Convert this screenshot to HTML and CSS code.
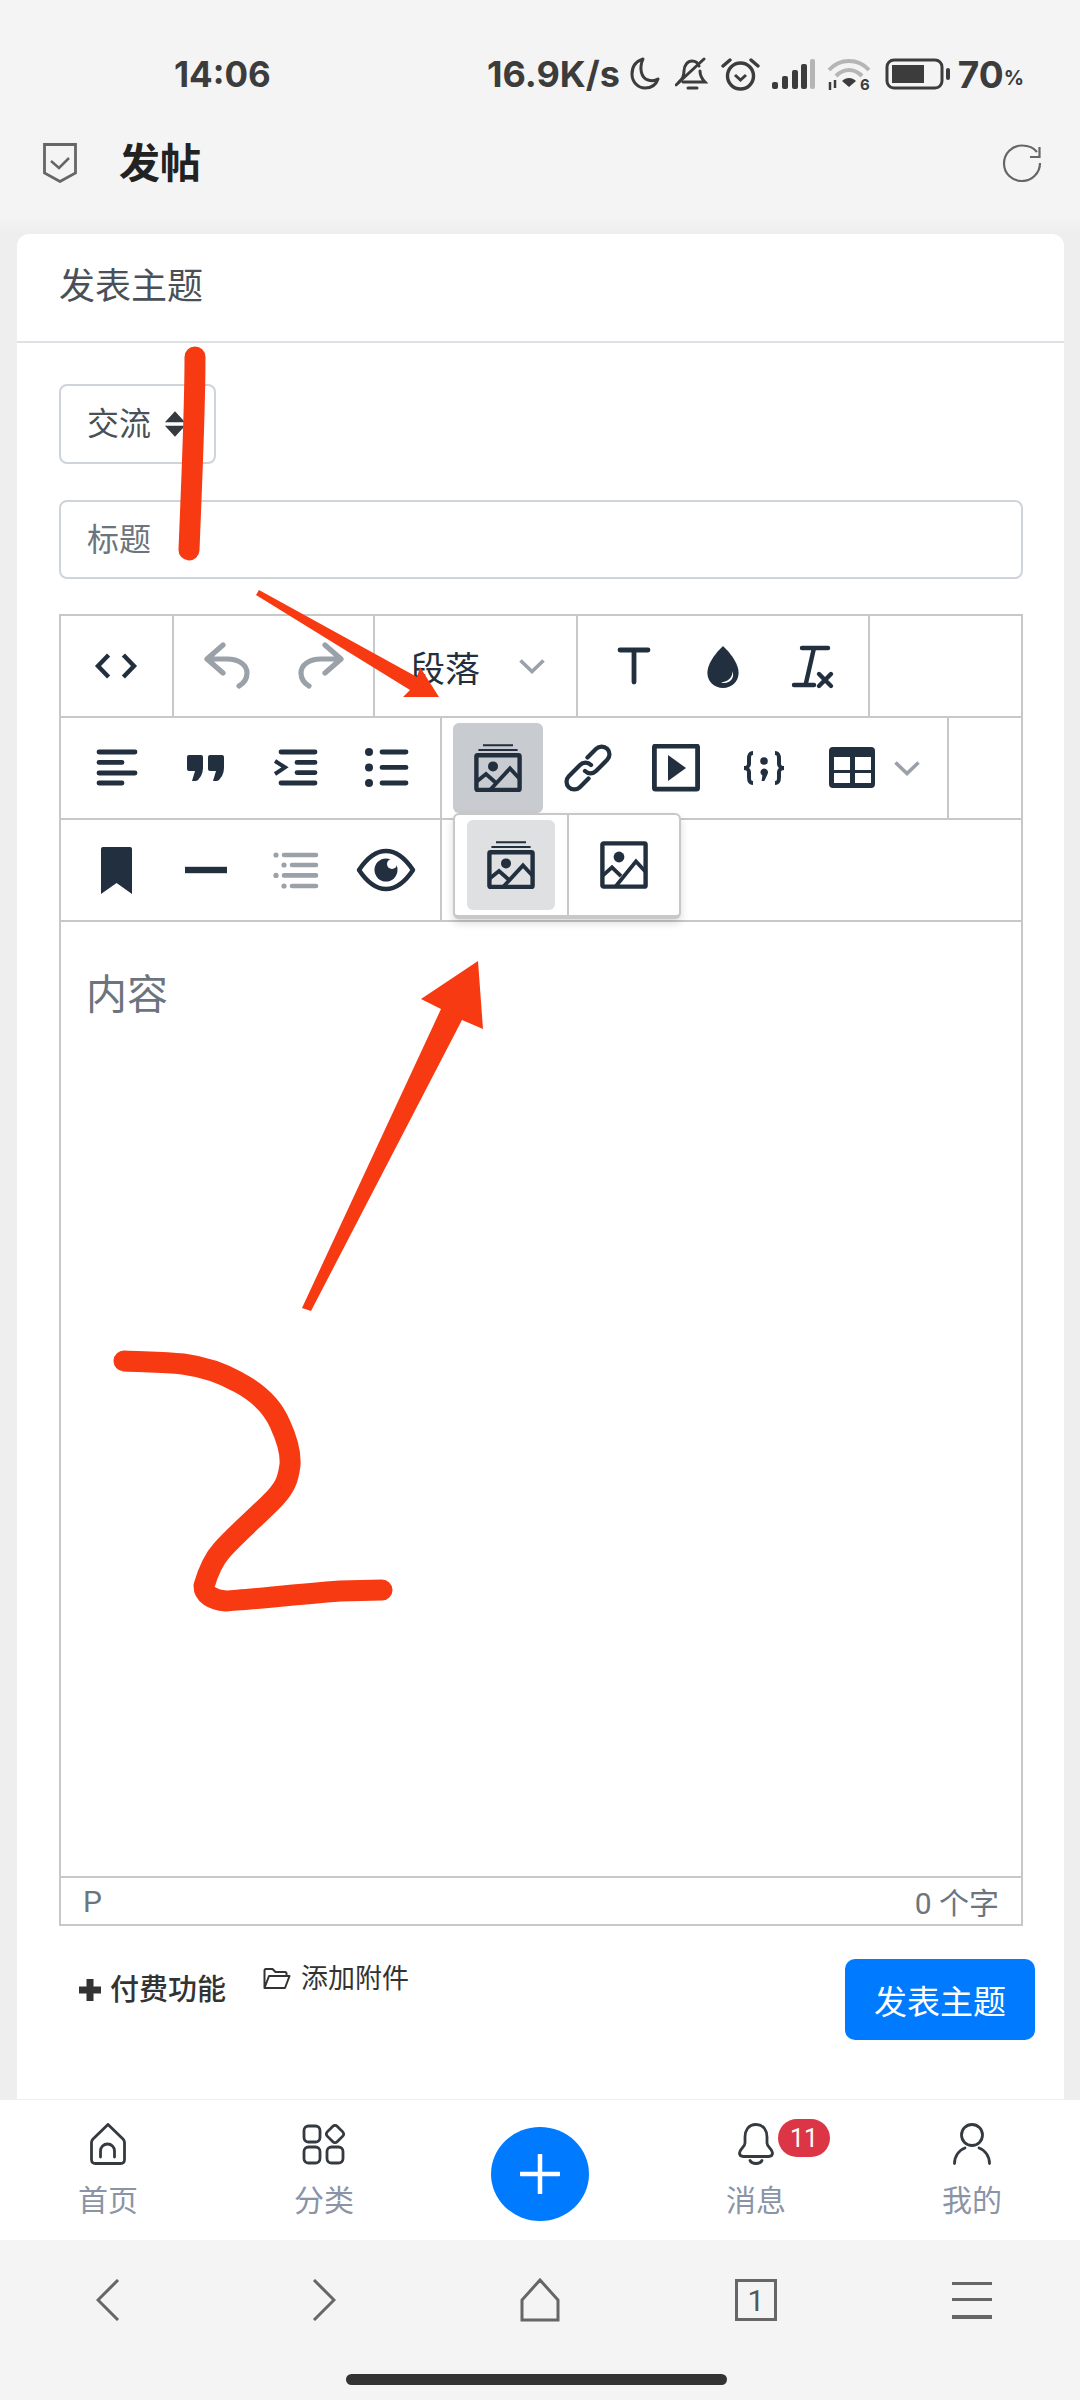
FILE: index.html
```html
<!DOCTYPE html>
<html lang="zh">
<head>
  <meta charset="UTF-8" />
  <meta name="viewport" content="width=device-width, initial-scale=1.0"/>
  <title>发帖</title>
  <link rel="stylesheet" href="styles.css">
</head>
<body>

<svg class="defs" width="0" height="0">
  <symbol id="i-images" viewBox="0 0 24 24">
    <path d="M4.500 .6H19.500M2.200 3H21.800" fill="none" stroke="currentColor" stroke-width="1"/>
    <rect x="1.200" y="5.600" width="21.600" height="17.400" rx=".6" fill="none" stroke="currentColor" stroke-width="2.200"/>
    <circle cx="9.500" cy="11.200" r="2.500" fill="currentColor"/>
    <path d="M1.500 18.600 6 15l4.500 4M8 23 18 12.200l5 5.400" fill="none" stroke="currentColor" stroke-width="1.900"/>
  </symbol>
  <symbol id="i-image" viewBox="0 0 24 24">
    <rect x="1.200" y="1.200" width="21.600" height="21.600" rx=".6" fill="none" stroke="currentColor" stroke-width="2.200"/>
    <circle cx="9.500" cy="8" r="2.700" fill="currentColor"/>
    <path d="M1.500 17.200 6 13.200l4.500 4.400M7.600 23 18 10.200l5 5.400" fill="none" stroke="currentColor" stroke-width="1.900"/>
  </symbol>
  <symbol id="i-chevron" viewBox="0 0 28 16">
    <path d="M2.500 2.500 14 13.500 25.500 2.500" fill="none" stroke="currentColor" stroke-width="3.600"/>
  </symbol>
</svg>

<div class="phone">
  <div class="status">
    <span class="time">14:06</span>
    <div class="status-right">
      <span class="speed">16.9K/s</span>
      <svg class="st-moon" viewBox="0 0 32 34"><path d="M14 2C8 4 3 9 3 17c0 8 6 14 13 14 6 0 11-3 13-9-3 2-7 2-10 1-7-2-9-12-5-21Z" fill="none" stroke="#3c3c3c" stroke-width="3" stroke-linejoin="round"/></svg>
      <svg class="st-bell" viewBox="0 0 33 34"><path d="M4 25c3-3 5-5 5-11 0-6 4-10 8-10 3 0 6 2 7 5M25 14c0 5 2 8 5 11H8M13 31h9" fill="none" stroke="#3c3c3c" stroke-width="3" stroke-linecap="round"/><path d="M1 28 29 2" stroke="#3c3c3c" stroke-width="3" stroke-linecap="round"/></svg>
      <svg class="st-alarm" viewBox="0 0 39 34"><circle cx="19.500" cy="19" r="13" fill="none" stroke="#3c3c3c" stroke-width="3.400"/><path d="M14 18l5.500 5 5.500-5" fill="none" stroke="#3c3c3c" stroke-width="3"/><path d="M2 9 9 3M37 9 30 3" stroke="#3c3c3c" stroke-width="3.400" stroke-linecap="round"/></svg>
      <svg class="st-signal" viewBox="0 0 43 30"><g fill="#3c3c3c"><rect x="0" y="23" width="6" height="7" rx="2"/><rect x="10" y="17" width="6" height="13" rx="2"/><rect x="20" y="11" width="6" height="19" rx="2"/><rect x="29" y="5" width="6" height="25" rx="2"/></g><rect x="38" y="0" width="5" height="30" rx="2" fill="#b5b5b5"/></svg>
      <svg class="st-wifi" viewBox="0 0 44 34"><path d="M2 13C13 1 31 1 42 13M9 19c8-8 18-8 26 0" fill="none" stroke="#b5b5b5" stroke-width="4"/><path d="M15 24c4-4 10-4 14 0l-7 6Z" fill="#3c3c3c"/><path d="M3 25v8M8 23v8" stroke="#3c3c3c" stroke-width="2.500"/><text x="33" y="33" class="st-six">6</text></svg>
      <svg class="st-batt" viewBox="0 0 65 32"><rect x="2" y="2" width="55" height="28" rx="7" fill="none" stroke="#3c3c3c" stroke-width="3"/><rect x="7" y="7" width="32" height="18" fill="#3c3c3c"/><rect x="61" y="10" width="4" height="12" rx="2" fill="#3c3c3c"/></svg>
      <span class="batt-num">70</span><span class="batt-pct">%</span>
    </div>
  </div>

  <div class="appbar">
    <svg class="shield" viewBox="0 0 34 40"><path d="M1.500 1.500H32.500V30L17 38.500 1.500 30Z" fill="none" stroke="#666" stroke-width="2.800"/><path d="M8 18l8 7 10-10" fill="none" stroke="#666" stroke-width="2.500"/></svg>
    <span class="appbar-title">发帖</span>
    <svg class="refresh" viewBox="0 0 40 38"><path d="M35 8C32 4 26 1.500 20 1.500 10 1.500 2 9.500 2 19.500S10 37 20 37 38 29 38 19" fill="none" stroke="#666" stroke-width="2.200"/><path d="M37.500 3V13H28" fill="none" stroke="#666" stroke-width="2.200"/></svg>
  </div>

  <div class="main">
    <div class="card">
      <div class="card-head">发表主题</div>
      <div class="card-body">
        <div class="select"><span>交流</span>
          <svg class="select-arrows" viewBox="0 0 24 28"><path d="M12 0 23 12H1ZM12 28 1 16H23Z" fill="#343a40"/></svg>
        </div>
        <div class="input">标题</div>

        <div class="editor">
          <div class="tb-row">
            <div class="tb-group g-code">
              <span class="tool"><svg class="ic" viewBox="0 0 24 24"><path d="M8.300 6.500 3 12l5.300 5.500M15.700 6.500 21 12l-5.300 5.500" fill="none" stroke="currentColor" stroke-width="2.200"/></svg></span>
            </div>
            <div class="tb-group g-hist">
              <span class="tool muted"><svg class="ic" viewBox="0 0 24 24"><path d="M10 1.500 2 8.500l8 7M2 8.500H12C18 8.500 22 11.500 22 15.500 22 18 20.500 20.500 18 22" fill="none" stroke="currentColor" stroke-width="2.600" stroke-linecap="round" stroke-linejoin="round"/></svg></span>
              <span class="tool muted"><svg class="ic" viewBox="0 0 24 24"><path d="M14 1.500l8 7-8 7M22 8.500H12C6 8.500 2 11.500 2 15.500 2 18 3.500 20.500 6 22" fill="none" stroke="currentColor" stroke-width="2.600" stroke-linecap="round" stroke-linejoin="round"/></svg></span>
            </div>
            <div class="tb-group g-block">
              <span class="block-name">段落</span>
              <svg class="chev" viewBox="0 0 28 16"><use href="#i-chevron"/></svg>
            </div>
            <div class="tb-group">
              <span class="tool"><svg class="ic" viewBox="0 0 24 24"><path d="M5.500 4H19.500M12.500 4V20" fill="none" stroke="currentColor" stroke-width="2.400" stroke-linecap="round"/></svg></span>
              <span class="tool"><svg class="ic" viewBox="0 0 24 24"><path d="M12 2C12 2 4.200 9 4.200 15.500 4.200 19.800 7.700 23 12 23 16.300 23 19.800 19.800 19.800 15.500 19.800 9 12 2 12 2Z" fill="currentColor"/><path d="M16.700 14.500C17 17.500 14.500 20 11 20.200 14.500 21.500 18.300 18.500 16.700 14.500Z" fill="#fff"/></svg></span>
              <span class="tool"><svg class="ic" viewBox="0 0 24 24"><path d="M6.500 3H19.500M12.500 3 8.500 20.500M2.500 21.500H12.500M15 16l6 6M21 16l-6 6" fill="none" stroke="currentColor" stroke-width="2.200" stroke-linecap="round"/></svg></span>
            </div>
          </div>

          <div class="tb-row">
            <div class="tb-group g-wide">
              <span class="tool"><svg class="ic" viewBox="0 0 24 24"><path d="M3.500 4H21.500M3.500 9.200H15M3.500 14.500H21.500M3.500 19.500H15" fill="none" stroke="currentColor" stroke-width="2.400" stroke-linecap="round"/></svg></span>
              <span class="tool"><svg class="ic" viewBox="0 0 24 24"><path d="M3.500 5.500H9.500Q10.500 5.500 10.500 6.500V12Q10.500 14 9.500 16L8 18Q7.500 18.500 6.500 18.500H5L6.500 13.500H3.500Q2.500 13.500 2.500 12.500V6.500Q2.500 5.500 3.500 5.500ZM14 5.500H20Q21 5.500 21 6.500V12Q21 14 20 16L18.500 18Q18 18.500 17 18.500H15.500L17 13.500H14Q13 13.500 13 12.500V6.500Q13 5.500 14 5.500Z" fill="currentColor"/></svg></span>
              <span class="tool"><svg class="ic" viewBox="0 0 24 24"><path d="M4.500 4H21.500M12.500 9.200H21.500M12.500 14.300H21.500M4.500 19.500H21.500" fill="none" stroke="currentColor" stroke-width="2.400" stroke-linecap="round"/><path d="M1.500 8.500 6.500 11.700 1.500 15" fill="none" stroke="currentColor" stroke-width="2"/></svg></span>
              <span class="tool"><svg class="ic" viewBox="0 0 24 24"><circle cx="3.500" cy="4" r="2" fill="currentColor"/><circle cx="3.500" cy="11.700" r="2" fill="currentColor"/><circle cx="3.500" cy="19.500" r="2" fill="currentColor"/><path d="M10 4H22M10 11.700H22M10 19.500H22" fill="none" stroke="currentColor" stroke-width="2.400" stroke-linecap="round"/></svg></span>
            </div>
            <div class="tb-group g-insert">
              <span class="tool active"><svg class="ic"><use href="#i-images"/></svg></span>
              <span class="tool"><svg class="ic" viewBox="0 0 24 24"><g transform="rotate(45 12 12) translate(12 12) scale(1.180) translate(-12 -12)" fill="none" stroke="currentColor" stroke-width="1.800" stroke-linecap="round"><path d="M8.700 9V3.800a3.300 3.300 0 0 1 6.600 0V10.500a3.300 3.300 0 0 1-3.300 3.300"/><path d="M15.300 15V20.200a3.300 3.300 0 0 1-6.600 0V13.500a3.300 3.300 0 0 1 3.300-3.300"/></g></svg></span>
              <span class="tool"><svg class="ic" viewBox="0 0 24 24"><rect x="1.200" y="1" width="21.600" height="21.600" rx=".6" fill="none" stroke="currentColor" stroke-width="2.400"/><path d="M8 5.500 17 12 8 18.500Z" fill="currentColor"/></svg></span>
              <span class="tool"><svg class="ic" viewBox="0 0 24 24"><path d="M6.500 4.500C4.500 4.500 4.500 6 4.500 7.500V10C4.500 11 3.500 12 2 12 3.500 12 4.500 13 4.500 14V16.500C4.500 18 4.500 19.500 6.500 19.500M17.500 4.500C19.500 4.500 19.500 6 19.500 7.500V10C19.500 11 20.500 12 22 12 20.500 12 19.500 13 19.500 14V16.500C19.500 18 19.500 19.500 17.500 19.500" fill="none" stroke="currentColor" stroke-width="2"/><circle cx="12" cy="8.500" r="1.900" fill="currentColor"/><path d="M10.200 14a1.900 1.900 0 1 1 3.600 1L12.200 18.500H10.800L11.200 15.800Q10.200 15.200 10.200 14Z" fill="currentColor"/></svg></span>
              <span class="tool tool-table"><svg class="ic" viewBox="0 0 24 24"><path fill-rule="evenodd" d="M2.500 1.500H21.500Q23.500 1.500 23.500 3.500V20Q23.500 22 21.500 22H2.500Q.500 22 .500 20V3.500Q.500 1.500 2.500 1.500ZM3 6.500V13H11V6.500ZM13.500 6.500V13H21.500V6.500ZM3 14.500V19.500H11V14.500ZM13.500 14.500V19.500H21.500V14.500Z" fill="currentColor"/></svg></span>
              <span class="tool-split"><svg class="chev" viewBox="0 0 28 16"><use href="#i-chevron"/></svg></span>
            </div>
          </div>

          <div class="tb-row">
            <div class="tb-group g-wide">
              <span class="tool"><svg class="ic" viewBox="0 0 24 24"><path d="M5.500 .5H19Q20 .5 20 1.500V24L12.300 18.500 4.500 24V1.500Q4.500 .5 5.500 .5Z" fill="currentColor"/></svg></span>
              <span class="tool"><svg class="ic" viewBox="0 0 24 24"><rect x="1.500" y="10.400" width="21" height="3.200" fill="currentColor"/></svg></span>
              <span class="tool muted"><svg class="ic" viewBox="0 0 24 24"><g fill="currentColor"><circle cx="2" cy="4.500" r="1.300"/><circle cx="6" cy="9.500" r="1.300"/><circle cx="2" cy="14.700" r="1.300"/><circle cx="6" cy="20" r="1.300"/></g><path d="M6 4.500H22M10 9.500H22M6 14.700H22M10 20H22" fill="none" stroke="currentColor" stroke-width="2.300" stroke-linecap="round"/></svg></span>
              <span class="tool"><svg class="ic-eye" viewBox="0 0 60 44"><path d="M3 22C13 7 22 3 30 3 38 3 47 7 57 22 47 37 38 41 30 41 22 41 13 37 3 22Z" fill="none" stroke="currentColor" stroke-width="4.500" stroke-linejoin="round"/><circle cx="30" cy="22" r="11.500" fill="currentColor"/><circle cx="36" cy="16" r="5" fill="#fff"/></svg></span>
            </div>
          </div>

          <div class="popup">
            <span class="pop-item"><span class="pop-btn on"><svg class="ic"><use href="#i-images"/></svg></span></span>
            <span class="pop-item"><span class="pop-btn"><svg class="ic"><use href="#i-image"/></svg></span></span>
          </div>

          <div class="edit-area">内容</div>
          <div class="edit-status"><span>P</span><span>0 个字</span></div>
        </div>

        <div class="form-foot">
          <span class="pay"><svg class="pay-plus" viewBox="0 0 24 24"><path d="M12 1V23M1 12H23" stroke="#333" stroke-width="7"/></svg>付费功能</span>
          <span class="attach"><svg class="folder" viewBox="0 0 28 24"><path d="M1.500 21V3.500Q1.500 2 3 2H9.500L12.500 5H22Q23.500 5 23.500 6.500V9M1.500 21 6 9H26.500L22 21Z" fill="none" stroke="#333" stroke-width="2" stroke-linejoin="round"/></svg>添加附件</span>
          <span class="submit">发表主题</span>
        </div>
      </div>
    </div>
  </div>

  <div class="bottom-nav">
    <div class="nav-item">
      <svg class="nav-ic" viewBox="0 0 36 42"><path d="M18 1.500 33 16Q34.500 17.500 34.500 19.500V36.500Q34.500 40.500 30.500 40.500H5.500Q1.500 40.500 1.500 36.500V19.500Q1.500 17.500 3 16ZM10.500 34V28a7 7 0 0 1 14 0V34" fill="none" stroke="#343a40" stroke-width="2.800" stroke-linecap="round"/></svg>
      <span class="nav-label">首页</span>
    </div>
    <div class="nav-item">
      <svg class="nav-ic" viewBox="0 0 44 42"><g fill="none" stroke="#343a40" stroke-width="2.800"><rect x="2" y="3" width="16" height="16" rx="4.500"/><rect x="2" y="24" width="16" height="16" rx="4.500"/><rect x="25" y="24" width="16" height="16" rx="4.500"/><rect x="26" y="4" width="14" height="14" rx="3" transform="rotate(45 33 11)"/></g></svg>
      <span class="nav-label">分类</span>
    </div>
    <div class="nav-item">
      <span class="fab"><svg class="fab-plus" viewBox="0 0 40 40"><path d="M20 1V39M1 20H39" stroke="#fff" stroke-width="4.500" stroke-linecap="round"/></svg></span>
    </div>
    <div class="nav-item nav-msg">
      <svg class="nav-ic" viewBox="0 0 36 42"><path d="M18 1.500C10 1.500 7 8 7 14V20C7 24 1.500 26 1.500 30 1.500 32.500 3.500 33.500 5.500 33.500H30.500C32.500 33.500 34.500 32.500 34.500 30 34.500 26 29 24 29 20V14C29 8 26 1.500 18 1.500ZM12 37.500C14 41.500 22 41.500 24 37.500" fill="none" stroke="#343a40" stroke-width="2.800" stroke-linecap="round"/></svg>
      <span class="nav-label">消息</span>
      <span class="badge">11</span>
    </div>
    <div class="nav-item">
      <svg class="nav-ic" viewBox="0 0 38 42"><circle cx="19" cy="12" r="10.500" fill="none" stroke="#343a40" stroke-width="2.800"/><path d="M1.500 40.500C1.500 33 6 27 12 25M26 25C32 27 36.500 33 36.500 40.500" fill="none" stroke="#343a40" stroke-width="2.800" stroke-linecap="round"/></svg>
      <span class="nav-label">我的</span>
    </div>
  </div>

  <div class="browser-bar">
    <div class="browser-row">
      <span class="br-item"><svg class="br-ic" viewBox="0 0 24 42"><path d="M22 1 2 21 22 41" fill="none" stroke="#666" stroke-width="3"/></svg></span>
      <span class="br-item"><svg class="br-ic" viewBox="0 0 24 42"><path d="M2 1 22 21 2 41" fill="none" stroke="#666" stroke-width="3"/></svg></span>
      <span class="br-item"><svg class="br-home" viewBox="0 0 40 44"><path d="M20 2 38 22V42H2V22Z" fill="none" stroke="#666" stroke-width="3"/></svg></span>
      <span class="br-item"><span class="br-tabs">1</span></span>
      <span class="br-item"><span class="br-menu"></span></span>
    </div>
    <div class="home-bar"></div>
  </div>
</div>

<!-- marks drawn by hand on the screenshot -->
<svg class="marks" viewBox="0 0 1080 2400">
  <path d="M195 357C195 400 193 450 191 500L189 550" class="mark-line"/>
  <path d="M259 590 256 595 410 690 403 697H439L420 667 417 677Z" fill="#f83a12"/>
  <path d="M478 961 421 999 441 1009 302 1308 311 1311 462 1020 483 1029Z" fill="#f83a12"/>
  <path d="M124 1361C145 1362 165 1362 183 1364C205 1367 222 1373 238 1382C255 1391 272 1405 280 1424C286 1437 291 1452 290 1465C288 1480 285 1487 275 1498C262 1512 238 1532 222 1550C213 1560 208 1572 204 1586C204 1594 212 1600 226 1601C245 1600 290 1595 340 1591L382 1590" class="mark-line"/>
</svg>

</body>
</html>
```

FILE: styles.css
```css
* {
  box-sizing: border-box;
}

body {
  margin: 0;
  width: 1080px;
  height: 2400px;
  overflow: hidden;
  position: relative;
  background: #f4f4f4;
  font-family: Roboto, "Noto Sans CJK SC", sans-serif;
  color: #495057;
}

.defs {
  position: absolute;
}

.phone {
  display: flex;
  flex-direction: column;
  height: 2400px;
}

/* status bar */
.status {
  display: flex;
  align-items: center;
  height: 115px;
  padding: 33px 56px 0 174px;
  font-family: Inter, sans-serif;
  font-weight: 700;
  color: #3c3c3c;
  white-space: nowrap;
  flex-shrink: 0;
}

.time {
  font-size: 35px;
}

.status-right {
  margin-left: auto;
  display: flex;
  align-items: center;
}

.speed {
  font-size: 36px;
}

.st-moon {
  width: 32px;
  height: 34px;
  margin-left: 9px;
}

.st-bell {
  width: 33px;
  height: 34px;
  margin-left: 14px;
}

.st-alarm {
  width: 39px;
  height: 34px;
  margin-left: 13px;
}

.st-signal {
  width: 43px;
  height: 30px;
  margin-left: 12px;
}

.st-wifi {
  width: 44px;
  height: 34px;
  margin-left: 12px;
}

.st-six {
  font-size: 15px;
  font-weight: 700;
  fill: #3c3c3c;
}

.st-batt {
  width: 65px;
  height: 32px;
  margin-left: 14px;
}

.batt-num {
  font-size: 37px;
  margin-left: 8px;
}

.batt-pct {
  font-size: 20px;
  margin-top: 8px;
}

/* app bar */
.appbar {
  display: flex;
  align-items: center;
  height: 105px;
  padding: 0 38px 10px 43px;
  flex-shrink: 0;
}

.shield {
  width: 34px;
  height: 40px;
}

.appbar-title {
  font-size: 41px;
  font-weight: 700;
  color: #222;
  margin: 0 0 6px 42px;
}

.refresh {
  width: 40px;
  height: 38px;
  margin-left: auto;
}

/* card */
.main {
  flex: 1;
  display: flex;
  background: linear-gradient(#f2f2f2, #eee 14px);
  padding: 14px 16px 1px 17px;
}

.card {
  flex: 1;
  display: flex;
  flex-direction: column;
  background: #fff;
  border-radius: 12px 12px 0 0;
}

.card-head {
  height: 109px;
  padding: 0 43px 9px 42px;
  display: flex;
  align-items: center;
  font-size: 36px;
  border-bottom: 2px solid #dee2e6;
}

.card-body {
  padding: 41px 41px 0 42px;
}

.select {
  width: 157px;
  height: 80px;
  display: flex;
  align-items: center;
  padding-left: 26px;
  font-size: 32px;
  border: 2px solid #ced4da;
  border-radius: 8px;
}

.select span {
  margin-bottom: 6px;
}

.select-arrows {
  width: 22px;
  height: 26px;
  margin-left: 13px;
}

.input {
  height: 79px;
  margin-top: 36px;
  display: flex;
  align-items: center;
  padding: 0 0 6px 26px;
  font-size: 32px;
  color: #6c757d;
  border: 2px solid #ced4da;
  border-radius: 8px;
}

/* editor */
.editor {
  position: relative;
  margin-top: 35px;
  height: 1312px;
  display: flex;
  flex-direction: column;
  border: 2px solid #c8c8c8;
  color: #222f3e;
}

.tb-row {
  display: flex;
  height: 102px;
  flex-shrink: 0;
  border-bottom: 2px solid #c8c8c8;
}

.tb-group {
  display: flex;
  align-items: center;
  padding: 0 10px;
  border-right: 2px solid #c8c8c8;
}

.g-code {
  width: 113px;
}

.g-hist {
  width: 201px;
  gap: 4px;
  padding: 0 8px;
}

.g-block {
  width: 203px;
  padding: 0 30px 0 35px;
  justify-content: space-between;
}

.block-name {
  font-size: 35px;
}

.g-wide {
  width: 381px;
}

.g-insert {
  width: 507px;
  padding: 0 0 0 11px;
}

.tool {
  width: 90px;
  height: 90px;
  flex-shrink: 0;
  display: flex;
  align-items: center;
  justify-content: center;
  border-radius: 6px;
}

.g-insert .tool {
  width: 88px;
}

.g-insert .tool.active {
  width: 90px;
  margin-right: 1px;
}

.tool.muted {
  color: #9aa1a8;
}

.tool.active {
  background: #c8cbcf;
}

.tool-table {
  margin-right: -6px;
}

.tool-split {
  display: flex;
  color: #9aa1a8;
  margin-left: 3px;
}

.ic {
  width: 48px;
  height: 48px;
}

.ic-eye {
  width: 60px;
  height: 44px;
}

.chev {
  width: 28px;
  height: 16px;
  color: #9aa1a8;
}

.popup {
  position: absolute;
  left: 392px;
  top: 197px;
  width: 228px;
  height: 106px;
  display: flex;
  background: #fff;
  border: 2px solid #c8c8c8;
  border-bottom-width: 4px;
  border-radius: 6px;
  box-shadow: 0 4px 8px rgba(0, 0, 0, .15);
}

.pop-item {
  display: flex;
  align-items: center;
  justify-content: center;
  width: 112px;
}

.pop-item + .pop-item {
  border-left: 2px solid #c8c8c8;
}

.pop-btn {
  width: 88px;
  height: 90px;
  display: flex;
  align-items: center;
  justify-content: center;
  border-radius: 6px;
}

.pop-btn.on {
  background: #dee0e2;
}

.edit-area {
  flex: 1;
  padding: 45px 25px 0;
  font-size: 41px;
  line-height: 56px;
  color: #6c757d;
}

.edit-status {
  height: 48px;
  display: flex;
  align-items: center;
  justify-content: space-between;
  padding: 0 22px;
  font-size: 30px;
  color: #6c757d;
  border-top: 2px solid #c8c8c8;
}

/* under the editor */
.form-foot {
  display: flex;
  align-items: flex-start;
  margin-top: 33px;
  color: #333;
}

.pay {
  display: flex;
  align-items: center;
  margin: 11px 0 0 19px;
  font-size: 29px;
  line-height: 40px;
  font-weight: 500;
}

.pay-plus {
  width: 24px;
  height: 24px;
  margin-right: 8px;
}

.attach {
  display: flex;
  align-items: center;
  margin: 4px 0 0 37px;
  font-size: 27px;
  line-height: 32px;
}

.folder {
  width: 28px;
  height: 24px;
  margin-right: 10px;
}

.submit {
  width: 190px;
  height: 81px;
  margin: 0 -12px 0 auto;
  display: flex;
  align-items: center;
  justify-content: center;
  font-size: 33px;
  color: #fff;
  background: #007bff;
  border-radius: 10px;
}

/* bottom nav */
.bottom-nav {
  display: flex;
  height: 140px;
  background: #fff;
  flex-shrink: 0;
}

.nav-item {
  flex: 1;
  position: relative;
  display: flex;
  flex-direction: column;
  align-items: center;
  padding-top: 23px;
}

.nav-ic {
  height: 42px;
}

.nav-label {
  margin-top: 14px;
  font-size: 30px;
  line-height: 44px;
  color: #8a94a6;
}

.fab {
  width: 98px;
  height: 94px;
  margin-top: 4px;
  display: flex;
  align-items: center;
  justify-content: center;
  background: #007bff;
  border-radius: 50%;
}

.fab-plus {
  width: 40px;
  height: 40px;
}

.badge {
  position: absolute;
  left: 130px;
  top: 19px;
  width: 52px;
  height: 38px;
  display: flex;
  align-items: center;
  justify-content: center;
  font-size: 25px;
  color: #fff;
  background: #dc3545;
  border-radius: 19px;
}

/* browser bar */
.browser-bar {
  height: 160px;
  display: flex;
  flex-direction: column;
  align-items: center;
  flex-shrink: 0;
}

.browser-row {
  display: flex;
  width: 100%;
  height: 134px;
  padding-bottom: 14px;
}

.br-item {
  flex: 1;
  display: flex;
  align-items: center;
  justify-content: center;
}

.br-ic {
  width: 24px;
  height: 42px;
}

.br-home {
  width: 40px;
  height: 44px;
}

.br-tabs {
  width: 42px;
  height: 42px;
  display: flex;
  align-items: center;
  justify-content: center;
  font-size: 30px;
  color: #555;
  border: 3px solid #666;
}

.br-menu {
  width: 40px;
  height: 37px;
  background: linear-gradient(#666 0 3px, transparent 3px 16px, #666 16px 19px, transparent 19px 33px, #666 33px 37px);
}

.home-bar {
  width: 381px;
  height: 11px;
  margin-right: 7px;
  background: #333;
  border-radius: 6px;
}

/* hand drawn marks */
.marks {
  position: absolute;
  left: 0;
  top: 0;
  width: 1080px;
  height: 2400px;
  pointer-events: none;
}

.mark-line {
  fill: none;
  stroke: #f83a12;
  stroke-width: 21;
  stroke-linecap: round;
  stroke-linejoin: round;
}
```
